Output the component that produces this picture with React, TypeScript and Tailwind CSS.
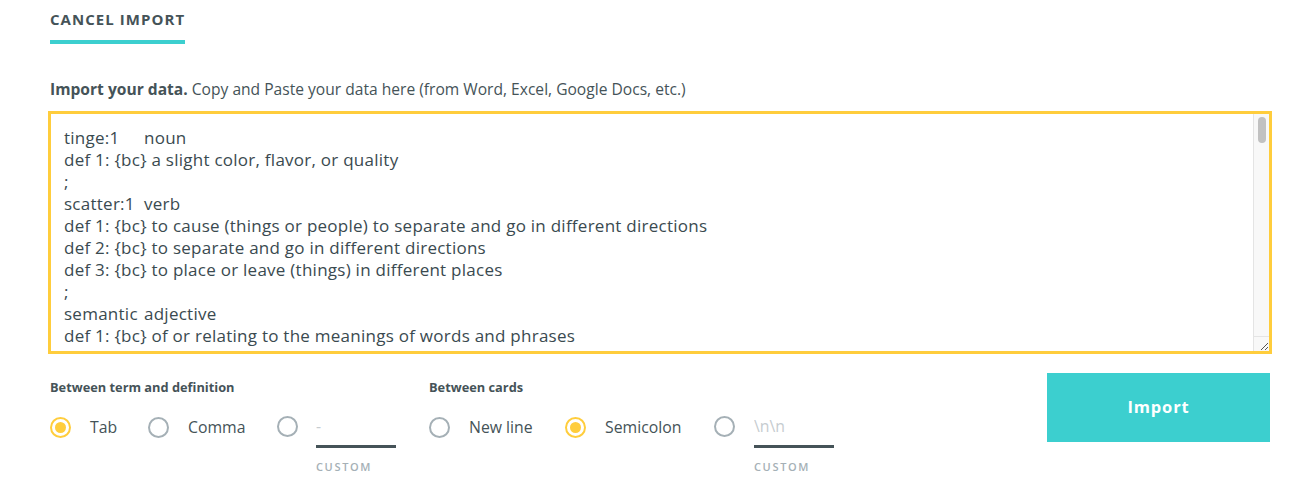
import React, { useState } from 'react';

const entries: [string, string, string[]][] = [
  ['tinge:1', 'noun', ['a slight color, flavor, or quality']],
  ['scatter:1', 'verb', [
    'to cause (things or people) to separate and go in different directions',
    'to separate and go in different directions',
    'to place or leave (things) in different places',
  ]],
  ['semantic', 'adjective', ['of or relating to the meanings of words and phrases']],
  ['vivid', 'adjective', ['seeming like real life because it is very clear', 'very bright', 'producing strong mental images']],
  ['parallel:1', 'adjective', ['lying or moving in the same direction but always the same distance apart', 'very similar and often happening at the same time']],
  ['reluctant', 'adjective', ['feeling or showing doubt about doing something']],
  ['abundant', 'adjective', ['existing or available in large quantities']],
  ['gesture:1', 'noun', ['a movement of your body that shows or emphasizes an idea or a feeling', 'something said or done to show a particular feeling']],
  ['linger', 'verb', ['to stay somewhere beyond the usual or expected time', 'to continue to exist as time passes']],
  ['ponder', 'verb', ['to think about or consider (something) carefully']],
  ['fragile', 'adjective', ['easily broken or damaged', 'easily hurt or harmed']],
  ['summit:1', 'noun', ['the highest point of a mountain', 'the highest level', 'a meeting or series of meetings between leaders']],
  ['wander:1', 'verb', ['to move around or go to different places usually without having a particular purpose or direction']],
  ['mimic:1', 'verb', ['to copy (someone or someone\'s behavior or speech) especially for humor']],
  ['obscure:1', 'adjective', ['not well-known', 'difficult to understand', 'difficult to see']],
  ['tremble', 'verb', ['to shake slightly because you are afraid, nervous, excited', 'to shake because of some force']],
  ['cunning:1', 'adjective', ['getting what is wanted in a clever and often deceptive way']],
  ['hasty', 'adjective', ['done or made very quickly', 'acting too quickly']],
  ['meager', 'adjective', ['very small or too small in amount']],
  ['solitary:1', 'adjective', ['without anyone or anything else', 'done by a person who is alone']],
  ['vast', 'adjective', ['very great in size, amount, or extent']],
];

const text = entries
  .map(([term, pos, defs]) => [`${term}\t${pos}`, ...defs.map((d, i) => `def ${i + 1}: {bc} ${d}`)].join('\n'))
  .join('\n;\n');

const Radio = ({ checked, label, width, onClick }: { checked: boolean; label?: string; width: string; onClick: () => void }) => (
  <button type="button" onClick={onClick} className={`flex items-center gap-[19px] cursor-pointer ${width}`}>
    <span
      className={`flex shrink-0 items-center justify-center w-[21px] h-[21px] rounded-full border-2 ${
        checked ? 'border-[#ffcd3c]' : 'border-[#a5b0b6]'
      }`}
    >
      {checked && <span className="w-[11px] h-[11px] rounded-full bg-[#ffcd3c]" />}
    </span>
    {label && <span className="text-[15.8px] text-[#455358]">{label}</span>}
  </button>
);

const CustomInput = ({ placeholder }: { placeholder: string }) => (
  <div className="flex flex-col w-[80px] mt-[-2px]">
    <input
      placeholder={placeholder}
      className="h-[32px] pb-[10px] border-b-[3px] border-[#455358] text-[15.8px] text-[#455358] placeholder:text-[#c6ccd0] outline-none bg-transparent"
    />
    <span className="mt-[11px] text-[11px] font-semibold tracking-[0.15em] leading-[15px] text-[#a5b0b6]">CUSTOM</span>
  </div>
);

export default function App() {
  const [termSep, setTermSep] = useState('tab');
  const [cardSep, setCardSep] = useState('semicolon');

  return (
    <div className="bg-white w-[1310px] h-[487px] pl-[48px] pr-[38px] font-['Open_Sans',sans-serif] text-[#455358]">
      {/* Tabs */}
      <div className="pl-[2px] pt-[7px]">
        <div className="inline-flex flex-col">
          <span className="text-[15px] font-bold tracking-[0.07em] leading-[18px]">CANCEL IMPORT</span>
          <span className="mt-[12px] h-[4px] bg-[#3ccfcf]" />
        </div>
      </div>

      {/* Description */}
      <p className="mt-[35px] pl-[2px] text-[15.6px] leading-[20px]">
        <span className="font-bold">Import your data.</span> Copy and Paste your data here (from Word, Excel, Google Docs, etc.)
      </p>

      <div className="relative mt-[12px]">
        <textarea
          defaultValue={text}
          className="block w-full h-[243px] border-[3px] border-[#ffcd3c] pt-[13px] pl-[13px] pr-[20px] text-[17px] tracking-[0.015em] leading-[22px] text-[#3a4a50] outline-none resize-none [tab-size:80px]"
        />
        {/* scrollbar */}
        <div className="pointer-events-none absolute top-[3px] bottom-[3px] right-[3px] w-[16px] flex flex-col bg-[#f8f8f8] border-l border-[#e4e4e4]">
          <div className="flex-1 pt-[3px] flex justify-center">
            <div className="w-[8px] h-[26px] rounded-full bg-[#c1c1c1]" />
          </div>
          <div className="h-[15px] border-t border-[#e4e4e4] flex items-end justify-end">
            <svg width="12" height="12" viewBox="0 0 12 12">
              <path d="M11 4 L4 11 M11 8 L8 11" stroke="#555" strokeWidth="1" />
            </svg>
          </div>
        </div>
      </div>

      {/* Options */}
      <div className="flex items-start mt-[23px]">
        <div className="flex flex-col pl-[2px] w-[381px]">
          <span className="text-[12.8px] font-bold leading-[20px]">Between term and definition</span>
          <div className="flex items-start mt-[21px]">
            <div className="mt-[-2px]"><Radio width="w-[98px]" checked={termSep === 'tab'} label="Tab" onClick={() => setTermSep('tab')} /></div>
            <div className="mt-[-2px]"><Radio width="w-[129px]" checked={termSep === 'comma'} label="Comma" onClick={() => setTermSep('comma')} /></div>
            <div className="mt-[-2px]"><Radio width="w-[39px]" checked={termSep === 'custom'} onClick={() => setTermSep('custom')} /></div>
            <CustomInput placeholder="-" />
          </div>
        </div>

        <div className="flex flex-col">
          <span className="text-[12.8px] font-bold leading-[20px]">Between cards</span>
          <div className="flex items-start mt-[21px]">
            <div className="mt-[-2px]"><Radio width="w-[136px]" checked={cardSep === 'newline'} label="New line" onClick={() => setCardSep('newline')} /></div>
            <div className="mt-[-2px]"><Radio width="w-[149px]" checked={cardSep === 'semicolon'} label="Semicolon" onClick={() => setCardSep('semicolon')} /></div>
            <div className="mt-[-2px]"><Radio width="w-[40px]" checked={cardSep === 'custom'} onClick={() => setCardSep('custom')} /></div>
            <CustomInput placeholder="\n\n" />
          </div>
        </div>

        <button
          type="button"
          className="ml-auto mt-[-4px] w-[223px] h-[69px] mr-[2px] bg-[#3ccfcf] text-white text-[16.5px] font-bold tracking-[0.05em]"
        >
          Import
        </button>
      </div>
    </div>
  );
}
